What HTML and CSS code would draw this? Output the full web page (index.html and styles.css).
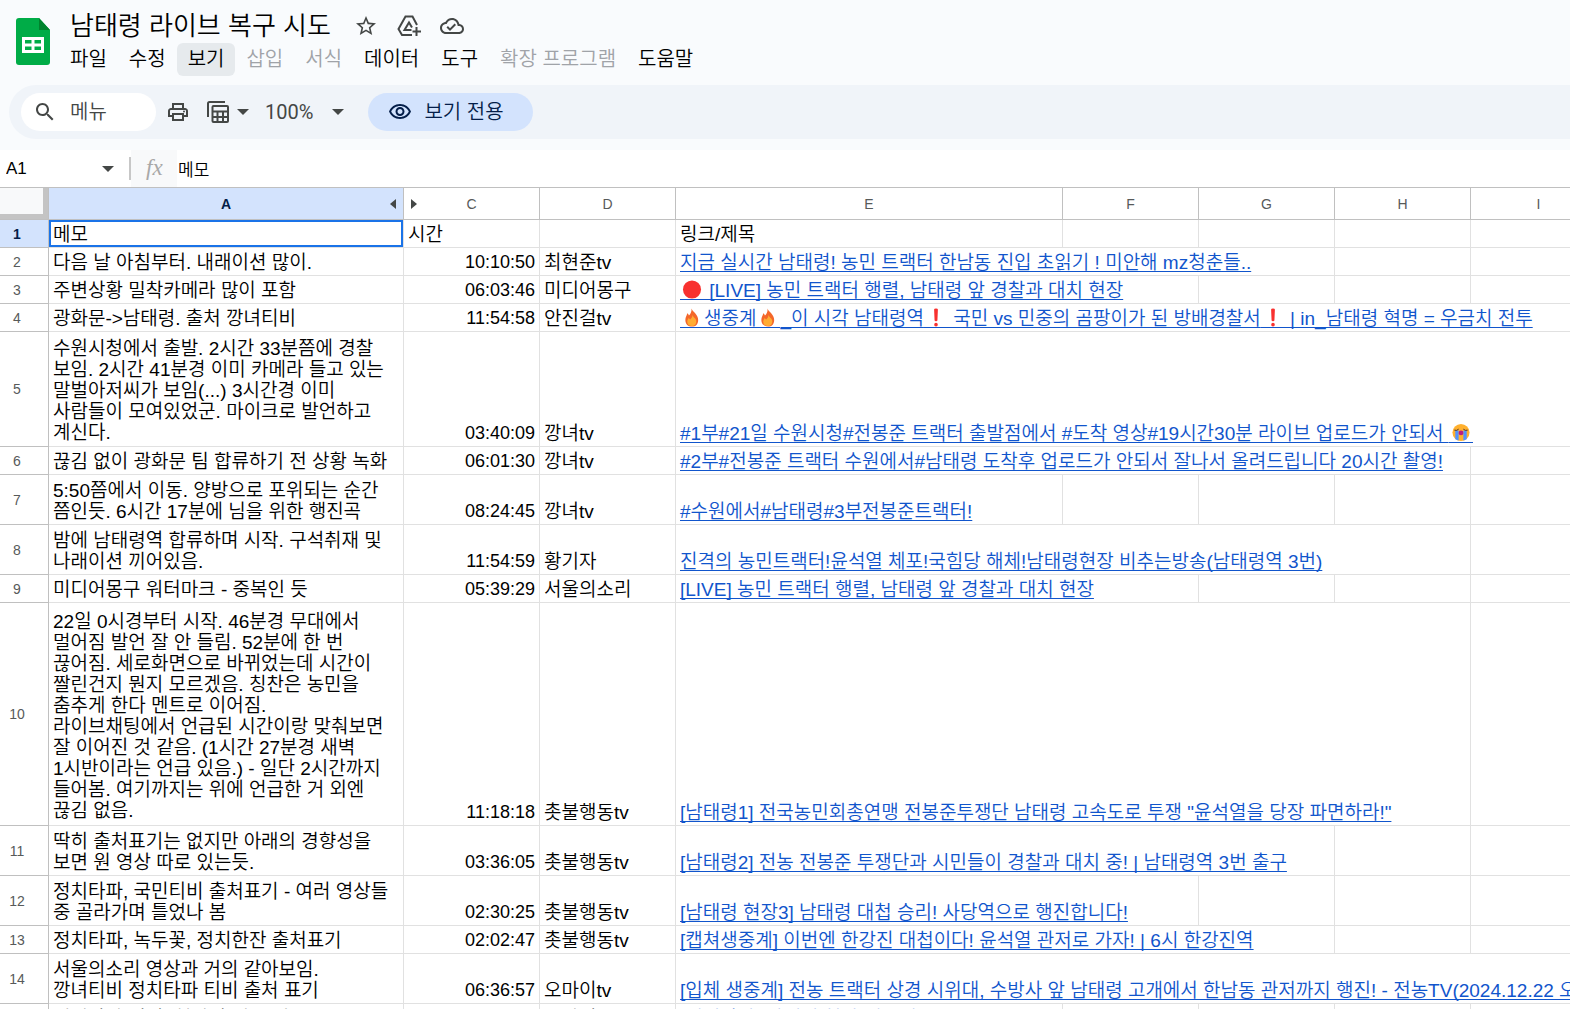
FILE: index.html
```
<!DOCTYPE html>
<html lang="ko">
<head>
    <meta charset="UTF-8">
    <title>남태령 라이브 복구 시도</title>
    <link rel="stylesheet" href="styles.css">
</head>
<body>
    <svg class="defs" aria-hidden="true">
        <symbol id="fire" viewBox="0 0 20 20">
            <path fill="#f4672a" d="M9.500 .5C10.500 4 16.500 6.500 16.500 12.500C16.500 17 14 19.500 10 19.500S3 17 3 12.500C3 9.500 4.500 8 5 5.500C6 6 6.500 7 6.800 8C8.500 6 9.800 4 9.500 .5Z"/>
            <path fill="#ffac33" d="M10.500 7C11 10 14.500 10.500 14.500 14C14.500 17 13 19 10 19S5 17.500 5 14.500C5 12.500 6 11.500 6.500 10.500L8 12C9.500 11 10.500 9 10.500 7Z"/>
        </symbol>
        <symbol id="bang" viewBox="0 0 20 20">
            <path fill="#f8312f" d="M8 1.500Q8 .5 10 .5T12 1.500L11.500 13Q11.500 14 10 14T8.500 13Z"/>
            <circle fill="#f8312f" cx="10" cy="17.500" r="1.900"/>
        </symbol>
    </svg>

    <header class="top">
        <svg class="logo" viewBox="0 0 34 47" aria-hidden="true">
            <path fill="#00ac47" d="M3 0H23L34 12V44Q34 47 31 47H3Q0 47 0 44V3Q0 0 3 0Z"/>
            <path fill="#00832d" d="M23 0L34 12H23Z"/>
            <path fill="#fff" fill-rule="evenodd" d="M6 19H28V35H6ZM9 22V25.500H15.500V22ZM18.500 22V25.500H25V22ZM9 28.500V32H15.500V28.500ZM18.500 28.500V32H25V28.500Z"/>
        </svg>
        <div class="heading">
            <div class="title-row">
                <h1>남태령 라이브 복구 시도</h1>
                <button class="icon-btn" aria-label="별표">
                    <svg viewBox="0 0 24 24"><path d="M22 9.240l-7.190-.620L12 2 9.190 8.630 2 9.240l5.460 4.730L5.820 21 12 17.270 18.180 21l-1.630-7.030L22 9.240zM12 15.400l-3.760 2.270 1-4.280-3.320-2.880 4.380-.380L12 6.100l1.710 4.040 4.380.380-3.320 2.880 1 4.280L12 15.400z"/></svg>
                </button>
                <button class="icon-btn" aria-label="드라이브에 추가">
                    <svg class="line" viewBox="0 0 24 24"><path d="M15 21H5L1.500 15 8.500 2.500H15.500L20 11M14.500 16H7.500L12 8.500 15 13.500M19.500 13V22M15.500 17.500H24"/></svg>
                </button>
                <button class="icon-btn" aria-label="저장됨">
                    <svg viewBox="0 0 24 24"><path d="M19.350 10.040C18.670 6.590 15.640 4 12 4 9.110 4 6.600 5.640 5.350 8.040 2.340 8.360 0 10.910 0 14c0 3.310 2.690 6 6 6h13c2.760 0 5-2.240 5-5 0-2.640-2.050-4.780-4.650-4.960zM19 18H6c-2.210 0-4-1.790-4-4 0-2.050 1.530-3.760 3.560-3.970l1.070-.110.500-.950C8.080 7.140 9.940 6 12 6c2.620 0 4.880 1.860 5.390 4.430l.300 1.500 1.530.110c1.560.100 2.780 1.410 2.780 2.960 0 1.650-1.350 3-3 3zm-9-3.820l-2.090-2.090L6.500 13.500 10 17l6.010-6.010-1.410-1.410z"/></svg>
                </button>
            </div>
            <nav class="menu">
                <button>파일</button>
                <button>수정</button>
                <button class="active">보기</button>
                <button disabled>삽입</button>
                <button disabled>서식</button>
                <button>데이터</button>
                <button>도구</button>
                <button disabled>확장 프로그램</button>
                <button>도움말</button>
            </nav>
        </div>
    </header>

    <div class="toolbar">
        <label class="search">
            <svg viewBox="0 0 24 24" aria-hidden="true"><path d="M15.500 14h-.790l-.280-.270C15.410 12.590 16 11.110 16 9.500 16 5.910 13.090 3 9.500 3S3 5.910 3 9.500 5.910 16 9.500 16c1.610 0 3.090-.590 4.230-1.570l.270.280v.790l5 4.990L20.490 19l-4.990-5zm-6 0C7.010 14 5 11.990 5 9.500S7.010 5 9.500 5 14 7.010 14 9.500 11.990 14 9.500 14z"/></svg>
            <input type="text" placeholder="메뉴" aria-label="메뉴">
        </label>
        <button class="tool" aria-label="인쇄">
            <svg viewBox="0 0 24 24"><path d="M19 8h-1V3H6v5H5c-1.660 0-3 1.340-3 3v6h4v4h12v-4h4v-6c0-1.660-1.340-3-3-3zM8 5h8v3H8V5zm8 14H8v-4h8v4zm2-4v-2H6v2H4v-4c0-.550.450-1 1-1h14c.550 0 1 .450 1 1v4h-2z"/><circle cx="18" cy="11.500" r="1"/></svg>
        </button>
        <button class="tool filter" aria-label="필터 보기">
            <svg class="line" viewBox="0 0 24 24"><path d="M2 17V3.500Q2 2 3.500 2H19M6.500 7Q6.500 6 7.500 6H21Q22 6 22 7V21Q22 22 21 22H7.500Q6.500 22 6.500 21ZM6.500 11.500H22M6.500 17H22M11.500 11.500V22M17 11.500V22"/></svg>
            <span class="caret"></span>
        </button>
        <button class="tool zoom">100% <span class="caret"></span></button>
        <button class="view-only">
            <svg viewBox="0 0 24 24" aria-hidden="true"><path d="M12 6c3.790 0 7.170 2.130 8.820 5.500C19.170 14.870 15.790 17 12 17s-7.170-2.130-8.820-5.500C4.830 8.130 8.210 6 12 6m0-2C7 4 2.730 7.110 1 11.500 2.730 15.890 7 19 12 19s9.270-3.110 11-7.500C21.270 7.110 17 4 12 4zm0 5c1.380 0 2.500 1.120 2.500 2.500S13.380 14 12 14s-2.500-1.120-2.500-2.500S10.620 9 12 9m0-2c-2.480 0-4.500 2.020-4.500 4.500S9.520 16 12 16s4.500-2.020 4.500-4.500S14.480 7 12 7z"/></svg>
            보기 전용
        </button>
    </div>

    <div class="formula-bar">
        <label class="name-box">
            <input type="text" value="A1" aria-label="이름 상자">
            <span class="caret"></span>
        </label>
        <span class="fx">fx</span>
        <input class="formula" type="text" value="메모" aria-label="수식" readonly>
    </div>

    <main class="sheet">
        <table>
            <colgroup>
                <col class="col-num">
                <col class="col-a">
                <col class="col">
                <col class="col">
                <col class="col-e">
                <col class="col">
                <col class="col">
                <col class="col">
                <col class="col">
            </colgroup>
            <thead>
                <tr>
                    <td class="corner"></td>
                    <th class="selected">A<span class="arrow left"></span></th>
                    <th><span class="arrow right"></span>C</th>
                    <th>D</th>
                    <th>E</th>
                    <th>F</th>
                    <th>G</th>
                    <th>H</th>
                    <th>I</th>
                </tr>
            </thead>
            <tbody>
                <tr>
                    <th class="selected">1</th>
                    <td class="current">메모</td>
                    <td>시간</td>
                    <td></td>
                    <td>링크/제목</td>
                    <td></td><td></td><td></td><td></td>
                </tr>
                <tr>
                    <th>2</th>
                    <td>다음 날 아침부터. 내래이션 많이.</td>
                    <td class="time">10:10:50</td>
                    <td>최현준tv</td>
                    <td colspan="3"><a href="#">지금 실시간 남태령! 농민 트랙터 한남동 진입 초읽기 ! 미안해 mz청춘들..</a></td>
                    <td></td><td></td>
                </tr>
                <tr>
                    <th>3</th>
                    <td>주변상황 밀착카메라 많이 포함</td>
                    <td class="time">06:03:46</td>
                    <td>미디어몽구</td>
                    <td colspan="2"><a href="#"><svg class="emoji" viewBox="0 0 20 20"><circle fill="#f8312f" cx="10" cy="10" r="9.500"/></svg> [LIVE] 농민 트랙터 행렬, 남태령 앞 경찰과 대치 현장</a></td>
                    <td></td><td></td><td></td>
                </tr>
                <tr>
                    <th>4</th>
                    <td>광화문-&gt;남태령. 출처 깡녀티비</td>
                    <td class="time">11:54:58</td>
                    <td>안진걸tv</td>
                    <td colspan="5"><a href="#"><svg class="emoji"><use href="#fire"/></svg>생중계<svg class="emoji"><use href="#fire"/></svg>_이 시각 남태령역<svg class="emoji"><use href="#bang"/></svg> 국민 vs 민중의 곰팡이가 된 방배경찰서<svg class="emoji"><use href="#bang"/></svg> | in_남태령 혁명 = 우금치 전투</a></td>
                </tr>
                <tr class="lines-5">
                    <th>5</th>
                    <td class="note">수원시청에서 출발. 2시간 33분쯤에 경찰<br>보임. 2시간 41분경 이미 카메라 들고 있는<br>말벌아저씨가 보임(...) 3시간경 이미<br>사람들이 모여있었군. 마이크로 발언하고<br>계신다.</td>
                    <td class="time">03:40:09</td>
                    <td>깡녀tv</td>
                    <td colspan="5"><a href="#">#1부#21일 수원시청#전봉준 트랙터 출발점에서 #도착 영상#19시간30분 라이브 업로드가 안되서 <svg class="emoji" viewBox="0 0 20 20"><circle fill="#ffb02e" cx="10" cy="10" r="9"/><path fill="#5092ff" d="M4 8H7.500V18.500L4 17ZM12.500 8H16V17L12.500 18.500Z"/><path fill="none" stroke="#402a32" d="M3 7.500Q5.500 8.500 7.500 6.500M12.500 6.500Q14.500 8.500 17 7.500"/><circle fill="#bb1d80" cx="10" cy="10.500" r="2.500"/></svg></a></td>
                </tr>
                <tr>
                    <th>6</th>
                    <td>끊김 없이 광화문 팀 합류하기 전 상황 녹화</td>
                    <td class="time">06:01:30</td>
                    <td>깡녀tv</td>
                    <td colspan="4"><a href="#">#2부#전봉준 트랙터 수원에서#남태령 도착후 업로드가 안되서 잘나서 올려드립니다 20시간 촬영!</a></td>
                    <td></td>
                </tr>
                <tr class="lines-2">
                    <th>7</th>
                    <td class="note">5:50쯤에서 이동. 양방으로 포위되는 순간<br>쯤인듯. 6시간 17분에 님을 위한 행진곡</td>
                    <td class="time">08:24:45</td>
                    <td>깡녀tv</td>
                    <td><a href="#">#수원에서#남태령#3부전봉준트랙터!</a></td>
                    <td></td><td></td><td></td><td></td>
                </tr>
                <tr class="lines-2">
                    <th>8</th>
                    <td class="note">밤에 남태령역 합류하며 시작. 구석취재 및<br>나래이션 끼어있음.</td>
                    <td class="time">11:54:59</td>
                    <td>황기자</td>
                    <td colspan="4"><a href="#">진격의 농민트랙터!윤석열 체포!국힘당 해체!남태령현장 비추는방송(남태령역 3번)</a></td>
                    <td></td>
                </tr>
                <tr>
                    <th>9</th>
                    <td>미디어몽구 워터마크 - 중복인 듯</td>
                    <td class="time">05:39:29</td>
                    <td>서울의소리</td>
                    <td colspan="2"><a href="#">[LIVE] 농민 트랙터 행렬, 남태령 앞 경찰과 대치 현장</a></td>
                    <td></td><td></td><td></td>
                </tr>
                <tr class="lines-10">
                    <th>10</th>
                    <td class="note">22일 0시경부터 시작. 46분경 무대에서<br>멀어짐 발언 잘 안 들림. 52분에 한 번<br>끊어짐. 세로화면으로 바뀌었는데 시간이<br>짤린건지 뭔지 모르겠음. 칭찬은 농민을<br>춤추게 한다 멘트로 이어짐.<br>라이브채팅에서 언급된 시간이랑 맞춰보면<br>잘 이어진 것 같음. (1시간 27분경 새벽<br>1시반이라는 언급 있음.) - 일단 2시간까지<br>들어봄. 여기까지는 위에 언급한 거 외엔<br>끊김 없음.</td>
                    <td class="time">11:18:18</td>
                    <td>촛불행동tv</td>
                    <td colspan="4"><a href="#">[남태령1] 전국농민회총연맹 전봉준투쟁단 남태령 고속도로 투쟁 "윤석열을 당장 파면하라!"</a></td>
                    <td></td>
                </tr>
                <tr class="lines-2">
                    <th>11</th>
                    <td class="note">딱히 출처표기는 없지만 아래의 경향성을<br>보면 원 영상 따로 있는듯.</td>
                    <td class="time">03:36:05</td>
                    <td>촛불행동tv</td>
                    <td colspan="3"><a href="#">[남태령2] 전농 전봉준 투쟁단과 시민들이 경찰과 대치 중! | 남태령역 3번 출구</a></td>
                    <td></td><td></td>
                </tr>
                <tr class="lines-2">
                    <th>12</th>
                    <td class="note">정치타파, 국민티비 출처표기 - 여러 영상들<br>중 골라가며 틀었나 봄</td>
                    <td class="time">02:30:25</td>
                    <td>촛불행동tv</td>
                    <td colspan="2"><a href="#">[남태령 현장3] 남태령 대첩 승리! 사당역으로 행진합니다!</a></td>
                    <td></td><td></td><td></td>
                </tr>
                <tr>
                    <th>13</th>
                    <td>정치타파, 녹두꽃, 정치한잔 출처표기</td>
                    <td class="time">02:02:47</td>
                    <td>촛불행동tv</td>
                    <td colspan="3"><a href="#">[캡쳐생중계] 이번엔 한강진 대첩이다! 윤석열 관저로 가자! | 6시 한강진역</a></td>
                    <td></td><td></td>
                </tr>
                <tr class="lines-2">
                    <th>14</th>
                    <td class="note">서울의소리 영상과 거의 같아보임.<br>깡녀티비 정치타파 티비 출처 표기</td>
                    <td class="time">06:36:57</td>
                    <td>오마이tv</td>
                    <td colspan="5"><a href="#">[입체 생중계] 전농 트랙터 상경 시위대, 수방사 앞 남태령 고개에서 한남동 관저까지 행진! - 전농TV(2024.12.22 오</a></td>
                </tr>
                <tr>
                    <th></th>
                    <td>정치타파 티비. 현장 출처 표기</td>
                    <td class="time"></td>
                    <td>오마이tv</td>
                    <td><a href="#">[정치타파] 남태령 현장 생중계</a></td>
                    <td></td><td></td><td></td><td></td>
                </tr>
            </tbody>
        </table>
    </main>
</body>
</html>
```

FILE: styles.css
```
* {
    box-sizing: border-box;
}
body {
    margin: 0;
    height: 100vh;
    display: flex;
    flex-direction: column;
    overflow: hidden;
    background-color: #f9fbfd;
    color: #000;
    font-family: "Liberation Sans", "Noto Sans CJK KR", sans-serif;
    font-weight: 350;
    font-size: 19px;
}
button, input {
    border: none;
    background: none;
    padding: 0;
    font: inherit;
    color: inherit;
}
.defs {
    display: none;
}
.top {
    display: flex;
    height: 85px;
    padding: 8px 16px 0;
    gap: 12px;
}
.logo {
    width: 34px;
    height: 47px;
    margin-top: 10px;
}
.title-row {
    display: flex;
    align-items: center;
    height: 35px;
    padding-left: 8px;
}
h1 {
    margin: 0 23px 0 0;
    font-size: 26px;
    font-weight: 350;
    line-height: 34px;
}
.icon-btn {
    display: flex;
    margin-right: 19px;
}
svg {
    fill: #444746;
}
.icon-btn svg, .tool svg, .search svg, .view-only svg {
    width: 24px;
    height: 24px;
}
svg.line {
    fill: none;
    stroke: #444746;
    stroke-width: 2;
}
.menu {
    display: flex;
}
.menu button {
    height: 33px;
    padding: 0 11px;
    border-radius: 6px;
    font-size: 20px;
    line-height: 33px;
    white-space: nowrap;
}
.menu button:first-child {
    padding-left: 8px;
}
.menu .active {
    background-color: #e6eaed;
}
.menu button:disabled {
    color: #a0a3a8;
}
.toolbar {
    display: flex;
    align-items: center;
    height: 54px;
    flex-shrink: 0;
    margin-left: 9px;
    padding-left: 12px;
    border-radius: 27px 0 0 27px;
    background-color: #f0f4f9;
    color: #444746;
}
.search {
    display: flex;
    align-items: center;
    gap: 13px;
    width: 135px;
    height: 38px;
    padding-left: 12px;
    border-radius: 19px;
    background-color: #fff;
    font-size: 20px;
}
.search input {
    width: 70px;
}
.search input::placeholder {
    color: #444746;
    opacity: 1;
}
.tool {
    display: flex;
    align-items: center;
    margin-left: 10px;
}
.filter {
    margin-left: 16px;
    gap: 7px;
}
.zoom {
    margin-left: 16px;
    gap: 19px;
    font-family: Roboto, sans-serif;
    font-weight: 400;
    font-size: 20px;
}
.caret {
    border: 6px solid transparent;
    border-top-color: #444746;
    border-bottom: none;
}
.view-only {
    display: flex;
    align-items: center;
    gap: 12px;
    height: 38px;
    margin-left: 24px;
    padding: 0 29px 0 20px;
    border-radius: 19px;
    background-color: #d3e3fd;
    color: #041e49;
    font-size: 20px;
    line-height: 24px;
}
.view-only svg {
    fill: #041e49;
}
.formula-bar {
    display: flex;
    align-items: center;
    height: 37px;
    flex-shrink: 0;
    margin-top: 11px;
    background-color: #fff;
    font-size: 17px;
}
.name-box {
    display: flex;
    align-items: center;
    width: 131px;
    height: 23px;
    padding-left: 6px;
    border-right: 2px solid #c7c7c7;
}
.name-box input {
    width: 96px;
}
.fx {
    width: 46px;
    height: 37px;
    padding-left: 15px;
    background-color: #f8f9fa;
    color: #a8a8a8;
    font: italic 23px/36px "Liberation Serif", serif;
}
.formula {
    flex: 1;
    padding-left: 1px;
}
.sheet {
    flex: 1;
    overflow: hidden;
    background-color: #fff;
    border-top: 1px solid #c0c0c0;
}
table {
    width: 1607px;
    table-layout: fixed;
    border-collapse: separate;
    border-spacing: 0;
}
.col-num {
    width: 49px;
}
.col-a {
    width: 355px;
}
.col {
    width: 136px;
}
.col-e {
    width: 387px;
}
th {
    position: relative;
    padding: 0;
    border-right: 1px solid #c0c0c0;
    border-bottom: 1px solid #c0c0c0;
    color: #575a5a;
    font-weight: 400;
    font-size: 14px;
}
tbody th {
    padding-right: 14px;
}
th.selected {
    background-color: #d3e3fd;
    color: #041e49;
    font-weight: 700;
}
thead tr {
    height: 32px;
}
td.corner {
    padding: 0;
    background-color: #f8f9fa;
    border-right: 1px solid #c0c0c0;
    border-bottom: 1px solid #c0c0c0;
    box-shadow: inset -5px -5px #c4c4c4;
}
.arrow {
    position: absolute;
    top: 11px;
    border: 5px solid transparent;
}
.arrow.left {
    right: 7px;
    border-right: 6px solid #444746;
    border-left: none;
}
.arrow.right {
    left: 7px;
    border-left: 6px solid #444746;
    border-right: none;
}
tbody tr {
    height: 28px;
}
tbody .lines-2 {
    height: 50px;
}
tbody .lines-5 {
    height: 115px;
}
tbody .lines-10 {
    height: 223px;
}
td {
    padding: 0 4px 2px;
    border-right: 1px solid #e1e1e1;
    border-bottom: 1px solid #e1e1e1;
    line-height: 21px;
    vertical-align: bottom;
    white-space: nowrap;
}
.note {
    padding: 3px 4px 0;
    vertical-align: middle;
}
.time {
    text-align: right;
    font-size: 18px;
}
.current {
    box-shadow: inset 0 0 0 2px #1a73e8;
}
td a {
    color: #1155cc;
    text-decoration-thickness: 1px;
    text-decoration-skip-ink: none;
    text-underline-offset: 2px;
}
.emoji {
    width: 24px;
    height: 20px;
    padding: 0 2px;
    border-bottom: 1px solid #1155cc;
    vertical-align: -3px;
    overflow: visible;
}
```
